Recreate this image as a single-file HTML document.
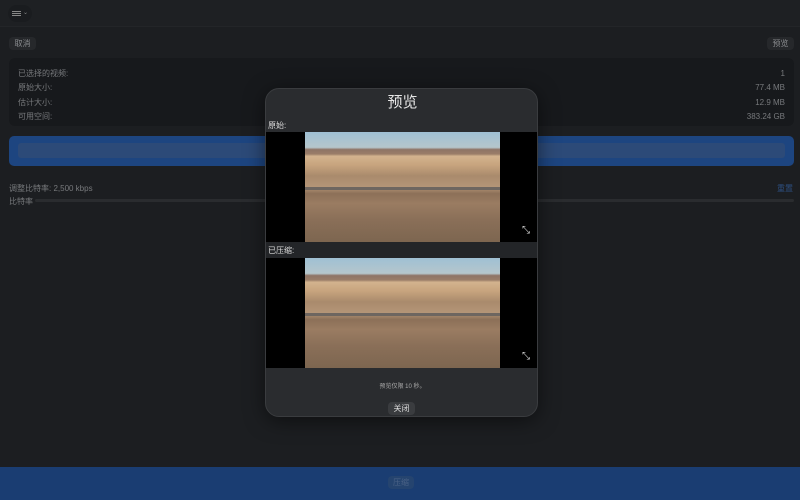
<!DOCTYPE html>
<html><head><meta charset="utf-8"><style>
*{margin:0;padding:0;box-sizing:border-box}
body{width:800px;height:500px;background:#1c1e21;font-family:"Liberation Sans","Noto Sans CJK SC",sans-serif;position:relative;overflow:hidden;color:#77797c;font-size:8px}
.a{position:absolute}
.btn{background:#26282b;border-radius:4px;text-align:center;line-height:13px;font-size:8px;color:#8a8c8f}
.vid{position:absolute;left:0;width:273px;height:110px;background:#000}
.img{position:absolute;left:39px;top:0;width:195px;height:110px;
background:linear-gradient(180deg,#9fc0d4 0%,#b5c6cc 14%,#8e7466 16%,#9a7d68 20%,#d3b38e 22%,#c7a47e 30%,#a98a6c 40%,#b49577 50%,#8c7058 56%,#9a7c62 65%,#8a6f58 80%,#7d6650 100%)}
.road{position:absolute;left:0;width:195px;height:3px;top:55px;background:#6e6660}
.exp{position:absolute;right:9px;top:93px;color:#ddd;font-size:10px}
</style></head><body>
<div class="a" style="left:0;top:0;width:800px;height:27px;background:#1e2023;border-bottom:1px solid #232528"></div>
<div class="a" style="left:8px;top:5px;width:24px;height:17px;border-radius:9px;background:#1a1c1f"></div>
<div class="a" style="left:12px;top:11px;width:9px;height:5px;border-top:1px solid #888;border-bottom:1px solid #888"><div style="margin-top:1px;height:1px;background:#888"></div></div>
<div class="a" style="left:23px;top:9px;color:#888;font-size:6px">⌄</div>
<div class="a btn" style="left:9px;top:37px;width:27px;height:13px">取消</div>
<div class="a btn" style="left:767px;top:37px;width:27px;height:13px">预览</div>
<div class="a" style="left:9px;top:58px;width:785px;height:68px;background:#17191c;border-radius:6px"></div>
<div class="a" style="left:18px;top:67px;line-height:14.3px">已选择的视频:<br>原始大小:<br>估计大小:<br>可用空间:</div>
<div class="a" style="right:15px;top:67px;line-height:14.3px;text-align:right">1<br>77.4 MB<br>12.9 MB<br>383.24 GB</div>
<div class="a" style="left:9px;top:136px;width:785px;height:30px;background:#1d4580;border-radius:5px"></div>
<div class="a" style="left:18px;top:143px;width:767px;height:15px;background:#2c4a78;border-radius:3px"></div>
<div class="a" style="left:9px;top:183px">调整比特率: 2,500 kbps</div>
<div class="a" style="right:7px;top:183px;color:#2d4f80">重置</div>
<div class="a" style="left:9px;top:196px">比特率</div>
<div class="a" style="left:35px;top:199px;width:759px;height:3px;background:#2a2c2f;border-radius:2px"></div>
<div class="a" style="left:0;top:467px;width:800px;height:33px;background:#1a3d72"></div>
<div class="a btn" style="left:388px;top:476px;width:26px;height:13px;background:#25446f;color:#4a6286">压缩</div>

<div class="a" style="left:265px;top:88px;width:273px;height:329px;background:#2a2c2f;border:1px solid #3a3c3f;border-radius:14px;overflow:hidden;box-shadow:0 4px 20px rgba(0,0,0,.5)">
 <div class="a" style="left:0;top:2px;width:273px;text-align:center;font-size:15px;color:#e6e6e6">预览</div>
 <div class="a" style="left:2px;top:31px;color:#ddd;font-size:8px">原始:</div>
 <div class="vid" style="top:43px"><div class="img"><div class="road"></div></div><div class="exp">⤡</div></div>
 <div class="a" style="left:0;top:153px;width:273px;height:16px;background:#232528"></div>
 <div class="a" style="left:2px;top:156px;color:#ddd;font-size:8px">已压缩:</div>
 <div class="vid" style="top:169px"><div class="img"><div class="road"></div></div><div class="exp">⤡</div></div>
 <div class="a" style="left:0;top:292px;width:273px;text-align:center;font-size:6px;color:#aaa">预览仅限 10 秒。</div>
 <div class="a btn" style="left:122px;top:313px;width:27px;height:13px;background:#3a3c3f;color:#ddd">关闭</div>
</div>
</body></html>
